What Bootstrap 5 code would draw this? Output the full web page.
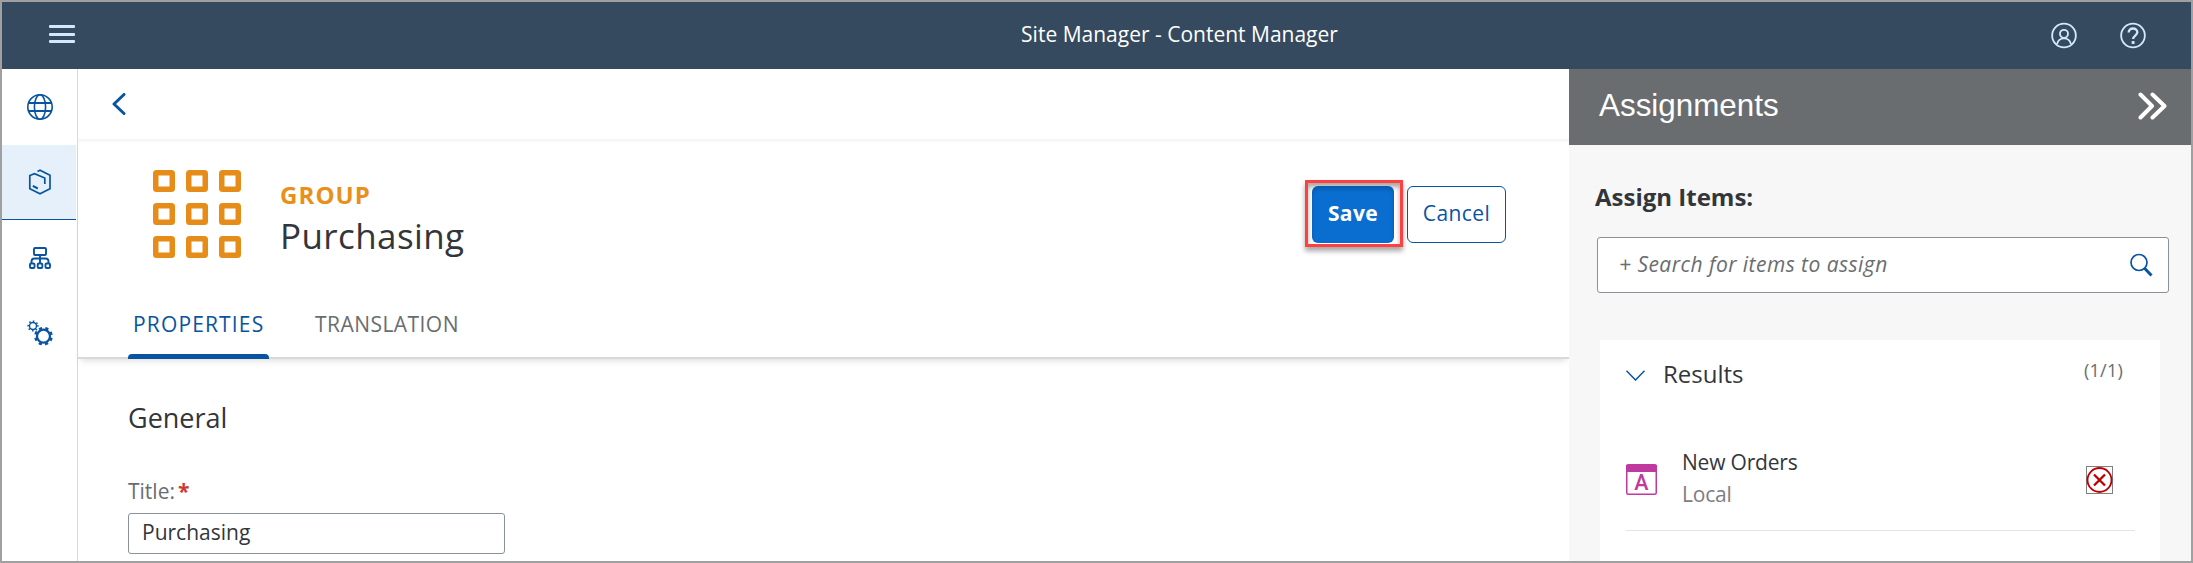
<!DOCTYPE html>
<html lang="en">
<head>
<meta charset="utf-8">
<title>Site Manager - Content Manager</title>
<link href="https://cdn.jsdelivr.net/npm/bootstrap@5.3.0/dist/css/bootstrap.min.css" rel="stylesheet">
<style>
html,body{height:100%}
body{font-family:"Open Sans","Noto Sans",sans-serif;font-size:21px;line-height:30px;color:#32363a;background:#fff;overflow:hidden}
svg{display:block;flex:none}
.frame{height:563px;border:2px solid #a0a0a0}
.shell{height:67px;background:#354a5f;color:#fff;padding:0 45px 0 47px}
.shell-title{padding:0 0 3px 164px}
.shell-side{width:130px;color:#d1e8ff}
.rail{width:76px;border-right:1px solid #d9d9d9;color:#0854a0}
.rail a{height:75px;width:74px;padding-left:2px;color:inherit}
.rail a:first-child{height:76px}
.rail a.on{background:#e5f0fa;border-bottom:1px solid #0854a0}
.crumb{height:70px;padding-left:34px}
.objhead{height:220px;padding-left:50px;border-bottom:2px solid #d9d9d9;box-shadow:0 5px 6px -3px rgba(0,0,0,.13),inset 0 5px 5px -4px rgba(0,0,0,.07)}
.objhead-top{padding:31px 63px 0 25px}
.objhead-text{padding:10px 0 0 39px}
.kind{font-size:24px;font-weight:700;color:#e9901a;line-height:30px;letter-spacing:1.1px}
.name{font-size:35px;line-height:46px;margin-top:3px;letter-spacing:.4px}
.objhead-actions{padding-top:10px}
.tabs a{height:75px;color:#6a6d70;padding-top:27px;letter-spacing:.45px}
.tabs a+a{margin-left:46px}
.tabs a.on{color:#0854a0;position:relative;width:141px;padding-left:5px;letter-spacing:1.15px}
.tabs a.on::after{content:"";position:absolute;left:0;right:0;bottom:-2px;height:5px;background:#0854a0;border-radius:4px 4px 0 0}
.callout-box{border:3px solid #ff4040;width:98px;height:67px;padding:3px 6px 1px 4px;box-shadow:0 4px 5px rgba(0,0,0,.35),inset 0 4px 5px rgba(0,0,0,.35)}
.b{font-size:21px;line-height:30px;padding:0 0 3px;border-radius:6px;letter-spacing:.4px}
.b-save,.b-save:hover{background:#0a6ed1;color:#fff;font-weight:700;width:82px;height:57px;border:0;box-shadow:inset 0 3px 4px rgba(0,0,0,.2)}
.b-cancel{border:1px solid #0854a0;color:#0854a0;width:99px;height:57px;margin:6px 0 0 4px}
.props{padding:41px 0 0 50px}
.h-sec{font-size:27px;line-height:36px}
.field-label{margin-top:40px;color:#6a6d70}
.req{color:#cc3a30;margin-left:3px}
.inp,.inp:focus{width:377px;height:41px;margin-top:7px;border:1px solid #89919a;border-radius:3px;font-size:21px;padding:0 13px 3px;color:#32363a}
.side{width:622px;background:#f7f7f7}
.side-h{height:76px;background:#6a6d70;color:#fff;font:31.4px "Liberation Sans",Arial,sans-serif;padding:0 24px 2px 30px}
.side-label{padding:37px 0 0 26px;font-size:24px}
.search{width:572px;height:56px;margin:25px 0 0 28px;background:#fff;border:1px solid #89919a;border-radius:3px;padding:0 15px 0 21px;color:#6a6d70;letter-spacing:.46px}
.search i{padding-bottom:3px}
.panel{width:560px;margin:47px 0 0 31px;background:#fff;padding:0 25px 0 26px}
.res-head{padding-top:19px;height:98px}
.res-title{font-size:24px;margin-left:18px}
.res-count{font-size:18px;line-height:22px;color:#6a6d70;margin-right:12px;letter-spacing:.25px}
.res-row{height:93px;border-bottom:1px solid #e4e4e4}
.res-text{margin:9px 0 0 25px;letter-spacing:-.2px}
</style>
</head>
<body>
<div class="frame d-flex flex-column">
<header class="shell d-flex align-items-center justify-content-between">
  <div class="shell-side pb-1"><svg width="26" height="18" fill="currentColor"><rect width="26" height="3" rx="1"/><rect y="8" width="26" height="3" rx="1"/><rect y="15" width="26" height="3" rx="1"/></svg></div>
  <div class="shell-title text-nowrap">Site Manager - Content Manager</div>
  <div class="shell-side d-flex justify-content-end" style="gap:43px">
    <svg width="26" height="27" viewBox="0 0 27 27" fill="none" stroke="currentColor" stroke-width="1.9"><circle cx="13.5" cy="13.5" r="12.3"/><circle cx="13.5" cy="11.8" r="4.2"/><path d="M6.300 22.500c.8-3.800 3.600-6 7.200-6s6.400 2.200 7.200 6"/></svg>
    <svg width="26" height="27" viewBox="0 0 27 27" fill="none" stroke="currentColor" stroke-width="1.9"><circle cx="13.5" cy="13.5" r="12.3"/><path d="M9 10.5c0-2.700 1.900-4.300 4.500-4.300s4.500 1.700 4.500 4c0 3.300-4.400 3.400-4.400 7" stroke-width="2.400"/><rect x="12.600" y="19.800" width="2" height="2" fill="currentColor" stroke-width="1"/></svg>
  </div>
</header>
<div class="d-flex flex-grow-1" style="min-height:0">
  <nav class="rail flex-shrink-0">
    <a class="d-flex align-items-center justify-content-center"><svg width="26" height="26" viewBox="0 0 26 26" fill="none" stroke="currentColor" stroke-width="1.6"><circle cx="13" cy="13" r="12.2"/><ellipse cx="13" cy="13" rx="5.6" ry="12.2"/><path d="M1.5 9h23M1.5 17h23" stroke-width="2"/></svg></a>
    <a class="on d-flex align-items-center justify-content-center"><svg width="26" height="26" viewBox="0 0 26 26" fill="none" stroke="currentColor" stroke-width="1.7"><path d="M10.500 2.500L13 1.300l10 5v13.400l-10 5-10.200-5V6.500L7.500 4.600 17.800 9v6"/><path d="M5.800 16.800l5 2.700" stroke-width="2"/></svg></a>
    <a class="d-flex align-items-center justify-content-center"><svg width="22" height="22" viewBox="0 0 22 22" fill="none" stroke="currentColor" stroke-width="1.9"><rect x="5" y="1" width="12" height="7" rx="1"/><path d="M11 8v8M2.500 16v-1.500q0-3 3-3h11q3 0 3 3V16"/><rect x="1" y="16.500" width="4.500" height="4.500" rx="1"/><rect x="8.700" y="16.500" width="4.600" height="4.500" rx="1"/><rect x="16.500" y="16.500" width="4.500" height="4.500" rx="1"/></svg></a>
    <a class="d-flex align-items-center justify-content-center"><svg width="26" height="26" viewBox="0 0 26 26" fill="none" stroke="currentColor"><circle cx="16.5" cy="16.2" r="6.5" stroke-width="2.300"/><circle cx="16.5" cy="16.2" r="8.200" stroke-width="2.300" stroke-dasharray="3.220 3.220" transform="rotate(11 16.5 16.2)"/><circle cx="6" cy="6" r="3.500" stroke-width="1.400"/><circle cx="6" cy="6" r="4.800" stroke-width="1.600" stroke-dasharray="1.500 2.270" transform="rotate(-9 6 6)"/></svg></a>
  </nav>
  <main class="flex-grow-1">
    <div class="crumb pt-4"><svg width="14" height="22" viewBox="0 0 14 22" fill="none" stroke="#0854a0" stroke-width="3" stroke-linecap="round" stroke-linejoin="round"><path d="M12 1.500L2 11l10 9.500"/></svg></div>
    <div class="objhead d-flex flex-column justify-content-between">
      <div class="objhead-top d-flex">
        <svg width="88" height="88" viewBox="0 0 88 88"><defs><rect id="cell" x="2.75" y="2.75" width="16.5" height="16.5" rx=".8" fill="none" stroke="#e58d18" stroke-width="5.5"/></defs><use href="#cell"/><use href="#cell" x="33"/><use href="#cell" x="66"/><use href="#cell" y="33"/><use href="#cell" x="33" y="33"/><use href="#cell" x="66" y="33"/><use href="#cell" y="66"/><use href="#cell" x="33" y="66"/><use href="#cell" x="66" y="66"/></svg>
        <div class="objhead-text flex-grow-1 text-nowrap"><div class="kind">GROUP</div><div class="name">Purchasing</div></div>
        <div class="objhead-actions d-flex align-items-start">
          <div class="callout-box"><button class="btn b b-save">Save</button></div>
          <button class="btn b b-cancel">Cancel</button>
        </div>
      </div>
      <nav class="tabs d-flex text-nowrap"><a class="on text-decoration-none">PROPERTIES</a><a class="text-decoration-none">TRANSLATION</a></nav>
    </div>
    <section class="props">
      <h2 class="h-sec m-0">General</h2>
      <label class="field-label d-block">Title:<b class="req">*</b></label>
      <input class="form-control inp" value="Purchasing">
    </section>
  </main>
  <aside class="side d-flex flex-column flex-shrink-0">
    <div class="side-h d-flex align-items-center justify-content-between"><span>Assignments</span><svg width="29" height="28" viewBox="0 0 29 28" fill="none" stroke="#fff" stroke-width="4" stroke-linecap="round" stroke-linejoin="round"><path d="M2.500 2.500L14 14 2.500 25.500M14.500 2.500L26.500 14l-12 11.500"/></svg></div>
    <div class="side-label fw-bold">Assign Items:</div>
    <div class="search d-flex align-items-center justify-content-between"><i>+ Search for items to assign</i><svg width="23" height="24" viewBox="0 0 23 24" fill="none" stroke="#0854a0"><circle cx="9" cy="9.5" r="8" stroke-width="1.7"/><path d="M14.800 15.500l6.700 7" stroke-width="3"/></svg></div>
    <div class="panel flex-grow-1">
      <div class="res-head d-flex align-items-start">
        <svg style="margin-top:11px" width="19" height="11" fill="none" stroke="#0854a0" stroke-width="1.5"><path d="M.5 .7L9.500 10 18.500 .7"/></svg>
        <span class="res-title flex-grow-1">Results</span>
        <span class="res-count">(1/1)</span>
      </div>
      <div class="res-row d-flex">
        <svg style="margin-top:26px" width="31" height="31" viewBox="0 0 31 31"><rect x=".75" y=".75" width="29.5" height="29.5" rx="1.5" fill="#fff" stroke="#c0399f" stroke-width="1.5"/><path d="M0 1h31v7H0z" fill="#c0399f"/><text x="15.5" y="26" text-anchor="middle" font-size="21.5" font-family="Roboto" font-weight="500" fill="#c0399f">A</text></svg>
        <div class="res-text flex-grow-1"><div>New Orders</div><div style="color:#7b7e81;padding-top:2px">Local</div></div>
        <svg style="margin:28px 22px 0 0" width="27" height="28" viewBox="0 0 27 28" fill="none" stroke="#b00"><rect x=".5" y=".5" width="26" height="27" stroke="#000" stroke-dasharray="1 1"/><circle cx="13.5" cy="14" r="12" stroke-width="1.8"/><path d="M8 8.500l11 11M19 8.500l-11 11" stroke-width="2.300"/></svg>
      </div>
    </div>
  </aside>
</div>
</div>
<script src="https://cdn.jsdelivr.net/npm/bootstrap@5.3.0/dist/js/bootstrap.bundle.min.js"></script>
</body>
</html>
